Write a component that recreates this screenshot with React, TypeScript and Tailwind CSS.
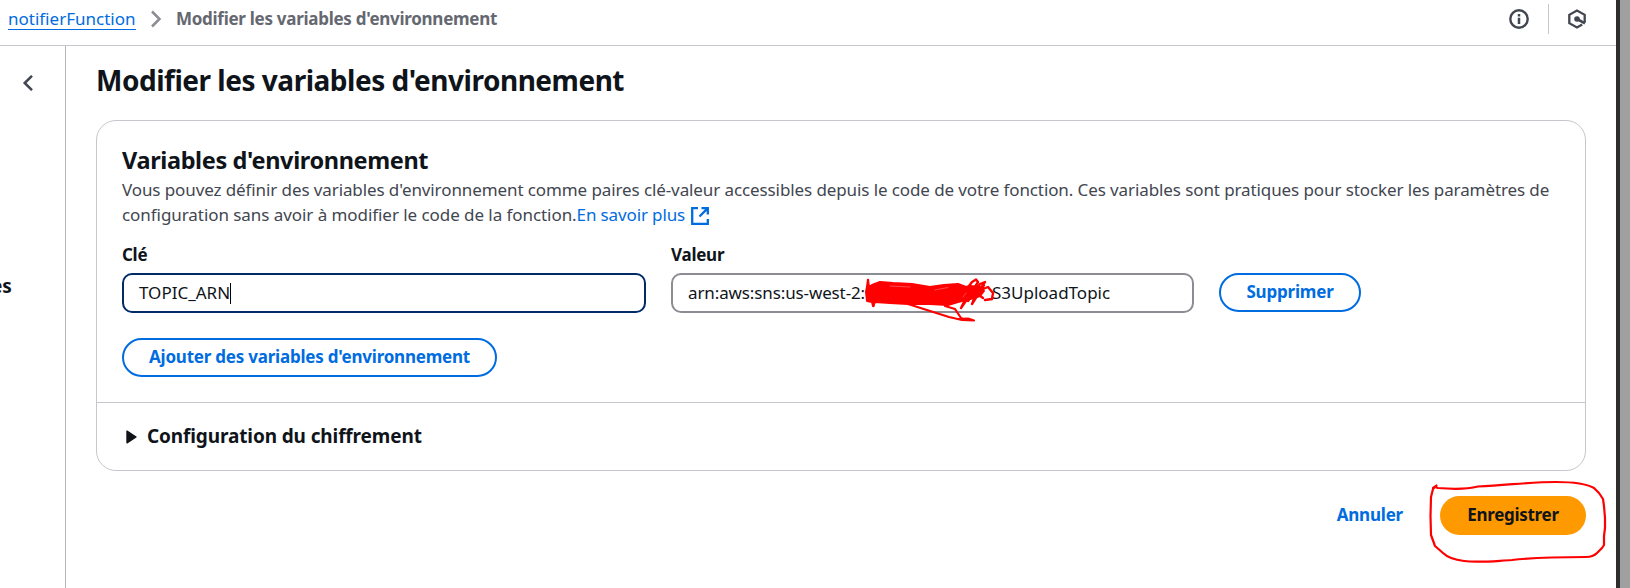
import type { ReactNode } from "react";

function OutlineButton({ children, className }: { children: ReactNode; className: string }) {
  return (
    <button
      className={`flex h-[39px] items-center justify-center rounded-full border-2 border-[#006ce0] bg-white pb-px font-bold whitespace-nowrap text-[#006ce0] ${className}`}
    >
      {children}
    </button>
  );
}

function Header() {
  return (
    <header className="flex h-[46px] shrink-0 items-start border-b border-[#c6c6cd] pt-[6px] pl-2">
      <a className="h-[24px] w-32 border-b border-[#006ce0] leading-[25px] text-[#006ce0]">notifierFunction</a>
      <svg className="mt-1 ml-3.5 h-[18px] w-3" viewBox="0 0 12 18" fill="none" stroke="#8c8c94" strokeWidth="2.5">
        <path d="M2 1.5 9.5 9 2 16.5" />
      </svg>
      <span className="ml-[14px] leading-[25px] font-bold tracking-[-0.28px] text-[#656871]">
        Modifier les variables d'environnement
      </span>
      <div className="-mt-[2px] mr-[29px] ml-auto flex h-[30px] items-center">
        <svg className="size-5" viewBox="0 0 20 20" fill="none" stroke="#424650" strokeWidth="2.4">
          <circle cx="10" cy="10" r="8.7" />
          <path d="M10 8.7V15M10 5v2.4" strokeWidth="2.5" />
        </svg>
        <div className="ml-[19px] h-[30px] w-px bg-[#c6c6cd]" />
        <svg className="ml-[18px] size-5" viewBox="0 0 20 20" fill="none" stroke="#424650" strokeWidth="2.3">
          <path d="M17.7 13.6V5.8L10 1.5 2.3 5.8v8.4L10 18.5l5.2-2.9" />
          <path d="M10 10l8 4.3" strokeWidth="2.6" />
          <circle cx="10" cy="10" r="2.8" fill="#424650" stroke="none" />
        </svg>
      </div>
    </header>
  );
}

function VariablesCard() {
  return (
    <section className="mt-[22px] h-[351px] rounded-[20px] border border-[#c6c6cd]">
      <div className="h-[282px] border-b border-[#c6c6cd] pt-6 pl-[25px]">
        <h2 className="text-[23.5px] leading-[30px] font-bold tracking-[-0.37px] text-[#0f141a]">
          Variables d'environnement
        </h2>
        <p className="mt-[2px] leading-[25px] whitespace-nowrap text-[#424650]">
          <span className="block tracking-[-0.1px]">
            Vous pouvez définir des variables d'environnement comme paires clé-valeur accessibles depuis le code de
            votre fonction. Ces variables sont pratiques pour stocker les paramètres de
          </span>
          <span className="flex tracking-[-0.06px]">
            configuration sans avoir à modifier le code de la fonction.
            <a className="flex tracking-[-0.13px] text-[#006ce0]">
              En savoir plus
              <svg className="mt-[5px] ml-[6px] size-[18px]" viewBox="0 0 18 18" fill="none" stroke="#006ce0" strokeWidth="2.3">
                <path d="M7 1.2H1.2v15.6h15.6V12" />
                <path d="M10.5 1.2h6.3v6.3M16.6 1.4 8.5 9.5" />
              </svg>
            </a>
          </span>
        </p>
        <div className="mt-[15px] flex items-end text-[#0f141a]">
          <div className="w-[524px]">
            <div className="leading-[25px] font-bold tracking-[-0.3px]">Clé</div>
            <div className="mt-[6px] flex h-10 items-center rounded-[10px] border-2 border-[#002b66] pl-[15px]">
              TOPIC_ARN
              <span className="h-[21px] w-px bg-black" />
            </div>
          </div>
          <div className="ml-[25px] w-[523px]">
            <div className="leading-[25px] font-bold tracking-[-0.25px]">Valeur</div>
            <div className="mt-[6px] flex h-10 items-center rounded-[10px] border-2 border-[#8c8c94] pl-[15px]">
              <span className="w-[304px] tracking-[-0.12px]">arn:aws:sns:us-west-2:</span>
              <span>S3UploadTopic</span>
            </div>
          </div>
          <OutlineButton className="mb-px ml-[25px] w-[142px] tracking-[-0.2px]">Supprimer</OutlineButton>
        </div>
        <OutlineButton className="mt-[25px] w-[375px] tracking-[-0.22px]">
          Ajouter des variables d'environnement
        </OutlineButton>
      </div>
      <div className="flex h-[67px] items-center pl-[29px]">
        <svg className="h-[14px] w-[11px]" viewBox="0 0 11 14">
          <path
            d="M1 1.2v11.6L10 7Z"
            fill="#0f141a"
            stroke="#0f141a"
            strokeWidth="1.4"
            strokeLinejoin="round"
          />
        </svg>
        <h3 className="ml-[10px] text-[19px] font-bold tracking-[-0.12px] text-[#0f141a]">
          Configuration du chiffrement
        </h3>
      </div>
    </section>
  );
}

function Annotations() {
  return (
    <svg
      className="pointer-events-none absolute top-0 left-0 h-[588px] w-[1630px]"
      viewBox="0 0 1630 588"
      fill="none"
      stroke="#ff0000"
      strokeWidth="2"
      strokeLinecap="round"
      strokeLinejoin="round"
    >
      <path
        fill="#ff0000"
        d="M868 281 866 292 867 301 872 302 873 306 875 302 890 303 908 304 930 304 948 305 958 302 966 300 974 298 980 296 984 291 980 287 970 286 966 287 958 284 944 285 930 287 912 284 893 283 880 282 872 285 869 287Z"
      />
      <path
        d="M908 304 930 311 949 317 962 320 974 320.5 968 318.5 958 319M945 306 955 309 961 318 966 320"
        strokeWidth="2.2"
      />
      <path
        d="M966 290 972 282 976 279.5 978 282 970 295 961 308 966 298M968 301 980 284 985 282 978 292 974 299 972 304 984 285M983 298 979 295 983 289 988 287 993 293 992 299 985 300M868 280v9M873.5 295v11"
        strokeWidth="2.4"
      />
      <path d="M890 286 910 287M935 290 948 287.5M963 297l3-4" stroke="#fa6a6a" strokeWidth="0.7" />
      <path
        d="M1436 486 1433 488 1435 487 1438 488C1450 489 1464 490 1478 486.5 1510 485 1530 482 1556 482 1577 482 1587 484 1594 488L1599 493 1603 499 1604 506 1605 518 1605 528 1604 536 1604 545 1602 548 1597 553C1594 556 1590 557 1586 557 1562 557 1530 558 1512 560 1494 561 1478 563 1464 561 1456 560 1448 558 1443 553L1435 546 1431 535 1430.5 516 1431 497 1433 489 1436.5 485.5"
        strokeWidth="2.2"
      />
    </svg>
  );
}

export default function App() {
  return (
    <div className="relative flex h-[588px] w-[1630px] overflow-hidden bg-white font-['Noto_Sans','Open_Sans',sans-serif] text-[17px]">
      <div className="flex min-w-0 flex-1 flex-col">
        <Header />
        <div className="flex flex-1">
          <aside className="flex w-[66px] shrink-0 flex-col overflow-hidden border-r border-[#b4b4bb]">
            <svg className="mt-[29px] ml-[22px] h-4 w-3" viewBox="0 0 12 16" fill="none" stroke="#424650" strokeWidth="2.5">
              <path d="M10 .8 2.7 8l7.3 7.2" />
            </svg>
            <div className="mt-[183px] -ml-[9px] text-[19px] leading-[25px] font-bold text-[#0f141a]">es</div>
          </aside>
          <main className="flex-1 px-[30px] pt-4">
            <h1 className="text-[28px] leading-9 font-bold tracking-[-0.48px] text-[#0f141a]">
              Modifier les variables d'environnement
            </h1>
            <VariablesCard />
            <div className="mt-[25px] flex items-center justify-end">
              <button className="pb-[2px] font-bold tracking-[-0.2px] text-[#006ce0]">Annuler</button>
              <button className="ml-[37px] h-[39px] w-[146px] rounded-full bg-[#ff9900] pb-[2px] font-bold tracking-[-0.3px] text-[#0f141a]">
                Enregistrer
              </button>
            </div>
          </main>
        </div>
      </div>
      <div className="w-[14px] shrink-0 border-l-4 border-[#2d2d2d] bg-[#a0a0a0]" />
      <Annotations />
    </div>
  );
}
